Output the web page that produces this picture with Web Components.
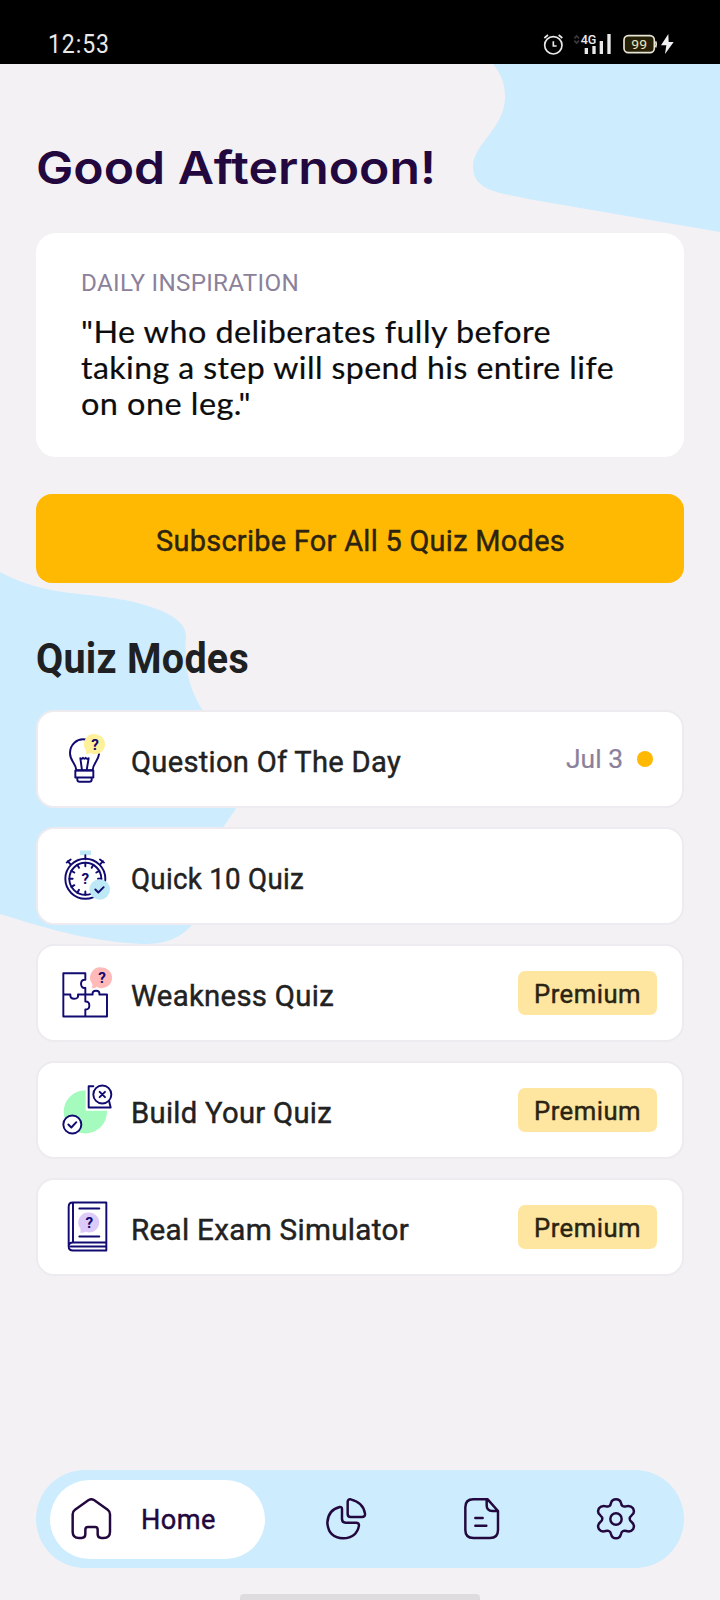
<!DOCTYPE html>
<html lang="en">
<head>
<meta charset="utf-8">
<title>Quiz Home</title>
<style>
html,body{margin:0;background:#f3f1f4}
body{width:720px;height:1600px;overflow:hidden;font-family:Roboto,"Liberation Sans",sans-serif}
</style>
</head>
<body>
<quiz-app></quiz-app>
<script>
const define = (name, html, ready) => customElements.define(name, class extends HTMLElement {
  connectedCallback() {
    if (this.shadowRoot) return;
    const t = document.createElement('template');
    t.innerHTML = html;
    this.attachShadow({mode: 'open'}).append(t.content.cloneNode(true));
    if (ready) ready(this, this.shadowRoot);
  }
});

/* One line of text, condensed or widened to the width in its attribute. */
define('fit-text', `<style>
:host{display:block;white-space:nowrap;flex:none}
span{display:inline-block;transform-origin:0 50%}
</style><span><slot></slot></span>`, (el, root) => {
  const w = +el.getAttribute('width'), span = root.querySelector('span');
  el.style.width = w + 'px';
  span.style.transform = `scaleX(${w / span.getBoundingClientRect().width})`;
});

define('status-bar', `<style>
:host{display:flex;box-sizing:border-box;height:64px;background:#000;color:#e9e9e9;padding:24px 44px 0 48px;justify-content:space-between}
fit-text{font-size:25px;line-height:41px;letter-spacing:1px}
svg{width:160px;height:40px;margin-top:1px}
</style>
<fit-text width="62">12:53</fit-text>
<svg viewBox="0 0 480 120" style="margin-right:-14px" fill="none" stroke="#e9e9e9">
<circle cx="70" cy="61" r="26" stroke-width="5"/><path d="M70 49v14h10M43 39l11-9M97 39l-11-9" stroke-width="5"/>
<path d="M133 40l7-7 7 7M133 47l7 7 7-7" stroke="#3a3a3a" stroke-width="5"/>
<g stroke-width="10"><path d="M169 69v18M192 63v24M214 48v39M237 27v60"/></g>
<text x="152" y="57" font-family="Roboto" font-size="36" font-weight="500" fill="#e9e9e9" stroke="#000" stroke-width="5" paint-order="stroke" textLength="47" lengthAdjust="spacingAndGlyphs">4G</text>
<rect x="282" y="32" width="91" height="51" rx="13" fill="#262006" stroke="#e8e4d4" stroke-width="5"/>
<path d="M377 49q4 8 0 18" stroke="#e8e4d4" stroke-width="5"/>
<text x="304" y="71" font-family="Roboto" font-size="41" fill="#ece6c4" stroke="none" textLength="47" lengthAdjust="spacingAndGlyphs">99</text>
<path d="M415 27l-22 34h16l-4 26 26-36h-15z" fill="#f2f2f2" stroke="none"/>
</svg>`);

define('inspiration-card', `<style>
:host{display:block;box-sizing:border-box;height:224px;background:#fff;border-radius:20px;padding:34.5px 44px 0 45px}
.label{color:#8b819b;font-size:24.8px;line-height:30px;margin-bottom:15.5px;letter-spacing:.3px}
.quote{color:#0c0c0c;font:30px/36px Lato,sans-serif;font-variant-ligatures:none;letter-spacing:.4px;-webkit-text-stroke:.2px #0c0c0c}
</style>
<fit-text class="label" width="218">DAILY INSPIRATION</fit-text>
<fit-text class="quote" width="470">"He who deliberates fully before</fit-text>
<fit-text class="quote" width="533">taking a step will spend his entire life</fit-text>
<fit-text class="quote" width="170">on one leg."</fit-text>`);

define('subscribe-button', `<style>
:host{display:flex;box-sizing:border-box;height:89px;background:#ffb902;border-radius:16px;margin-top:37px;padding-top:4px;align-items:center;justify-content:center;color:#2b2412;font-size:30px;-webkit-text-stroke:.45px #2b2412;letter-spacing:.3px}
</style><fit-text width="409">Subscribe For All 5 Quiz Modes</fit-text>`);

define('premium-badge', `<style>
:host{display:flex;box-sizing:border-box;width:139px;height:44px;margin-right:5px;padding-top:2px;border-radius:7px;background:#ffe6a0;align-items:center;justify-content:center;color:#2b2412;font-size:26px;-webkit-text-stroke:.45px #2b2412;letter-spacing:.5px}
</style><fit-text width="107">Premium</fit-text>`);

define('date-mark', `<style>
:host{display:flex;align-items:center;gap:14px;margin-right:9px;color:#8b819b;font-size:26.7px;-webkit-text-stroke:.2px #8b819b}
i{width:16px;height:16px;border-radius:50%;background:#ffb902}
</style><fit-text width="57">Jul 3</fit-text><i></i>`);

const icons = {
bulb: ['24 34.5', `<path d="M106 60C80 56 60 76 60 101c0 24 18 30 19 51h49c1-21 17-27 19-48"/><path d="M96 152l-5-36q5 4 8-1 4 6 8 0 4 5 9 1l-6 36M76 153h54v21H76zM82 175v6q0 6 7 6h29q7 0 7-6v-6"/><path d="M135 44a30 30 0 1 1-15 56q-6 5-13 3 3-5 1-11A30 30 0 0 1 135 44z" fill="#fff09a" stroke="none"/><text x="135" y="91">?</text>`],
watch: ['24 385.5', `<path d="M90 393h33v14H90z" fill="#bde9f7" stroke="none"/><path d="M106 407v12M61 434l-8-9M50 429l12-9M151 434l8-9M162 429l-12-9"/><circle cx="106" cy="478" r="60"/><circle cx="106" cy="478" r="48"/><path d="M106 430v10M106 516v10M58 478h10M144 478h10M82 436l5 9M130 436l-5 9M64 454l9 5M148 454l-9 5M64 502l9-5M82 520l5-9M130 520l-5-9"/><text x="106" y="494">?</text><circle cx="149" cy="510" r="31" fill="#bde9f7" stroke="none"/><path d="M136 510l9 9 16-16"/>`],
puzzle: ['24 46.5', `<path d="M40 71h66v20q-12-2-13 12 1 14 13 12v20H84q2 13-11 13t-12-13H40zM40 135v66h66v-21q12 1 12-12t-12-12v-21h22q-2-11 10-11t10 11h23v66h-66"/><path d="M156 54a31 31 0 1 1-16 58q-7 6-15 4 3-6 2-12A31 31 0 0 1 156 54z" fill="#ffb9b9" stroke="none"/><text x="156" y="101">?</text>`],
build: ['24 397.5', `<path d="M107 422v62h64a65 65 0 1 1-64-62z" fill="#a5fbbd" stroke="none"/><path d="M130 410h-14v64h66l-5-20"/><circle cx="157" cy="435" r="27" fill="#fff"/><path d="M149 427l16 16M165 427l-16 16"/><circle cx="67" cy="525" r="27" fill="#fff"/><path d="M55 525l9 9 15-16"/>`],
book: ['24 748.5', `<path d="M169 879V759H68q-12 0-12 13v119M69 759v119M169 879H69q-13 0-13 12t13 12h100zM62 891h107M88 777h60M88 861h60"/><path d="M118 789a30 30 0 1 1-11 58q-9 4-17 2 3-6 1-12A30 30 0 0 1 118 789z" fill="#dccbfa" stroke="none"/><text x="118" y="836">?</text>`]
};

define('quiz-row', `<style>
:host{display:flex;box-sizing:border-box;height:98px;border:2px solid #edebef;background:#fff;border-radius:18px;padding:0 20px;align-items:center;color:#222;font-size:30px}
svg{width:56px;height:56px;margin:1px 16.5px 0 0;fill:none;stroke:#110a70;stroke-width:5.8;stroke-linejoin:round;stroke-linecap:round;flex:none}
text{font:700 46px Roboto,sans-serif;fill:#110a70;stroke:none;text-anchor:middle;letter-spacing:0}
.t{padding-top:5px;flex:1;-webkit-text-stroke:.45px #222;letter-spacing:.3px}
</style><svg></svg><div class="t"><slot></slot></div><slot name="end"></slot>`, (el, root) => {
  const [pos, art] = icons[el.getAttribute('icon')], svg = root.querySelector('svg');
  svg.setAttribute('viewBox', pos + ' 168 168');
  svg.innerHTML = art;
});

define('nav-bar', `<style>
:host{display:flex;box-sizing:border-box;height:98px;border-radius:49px;background:#cdecfe;padding:0 14px;align-items:center;color:#22083e;font-size:27px}
.pill{display:flex;box-sizing:border-box;width:215px;height:79px;border-radius:40px;background:#fff;align-items:center;padding-left:19px;margin-right:59.3px;gap:27.5px}
fit-text{padding-top:1px;letter-spacing:.5px;-webkit-text-stroke:.45px #22083e}
svg{width:44px;height:44px;fill:none;stroke:#22083e;stroke-width:7.4;stroke-linejoin:round;stroke-linecap:round;flex:none}
.p{margin-right:91.4px}.d{margin-right:90.6px}
</style>
<div class="pill"><svg viewBox="117 126 132 132"><path d="M176 135q8-5 16 0l41 29q7 5 7 14v52q0 19-19 19h-7q-11 0-11-11v-14q0-8-8-8h-21q-8 0-8 8v14q0 11-11 11h-8q-19 0-19-19v-52q0-9 7-14z"/></svg><fit-text width="75">Home</fit-text></div>
<svg class="p" viewBox="73 126 132 132"><path d="M144 141q0-9 9-8 38 9 43 43 1 10-9 10h-34q-9 0-9-9zM120 156q7-1 7 6v30q0 11 11 11h31q9 0 9 8-6 37-48 39-44-2-47-47 2-38 37-47z"/></svg>
<svg class="d" viewBox="479 126 132 132"><path d="M562 133h-43q-24 0-24 24v68q0 24 24 24h50q24 0 24-24v-57zM559 133v18q0 17 17 17h17M525 189h22M525 212h33"/></svg>
<svg viewBox="883 126 132 132"><path d="M949 133q12 0 15 11 2 13 15 10 14-3 21 6 7 13-4 21-12 10 0 20 11 9 4 22-7 9-20 5-14-3-16 9-3 13-15 13t-15-13q-2-12-16-9-13 4-20-5-7-13 4-22 12-10 0-20-11-8-4-21 7-9 21-6 13 3 15-10 3-11 15-11z"/><circle cx="949" cy="192" r="17"/></svg>`);

define('quiz-app', `<style>
:host{display:flex;flex-direction:column;position:relative;width:720px;height:1600px;overflow:hidden;background:#f3f1f4}
.bg{position:absolute;left:0;top:0;width:720px;height:1600px}
status-bar,main,nav-bar,.grip{position:relative}
main{padding:75px 36px 0;flex:1}
.hi{font:600 45px/57px Inter,sans-serif;color:#22083e;margin-bottom:37px}
.modes{font-size:42px;line-height:51px;font-weight:700;color:#1e2022;margin-top:50px;margin-bottom:25.5px;letter-spacing:.3px}
.list{display:grid;gap:19px}
nav-bar{margin:0 36px 26px}
.grip{width:240px;height:6px;border-radius:4px 4px 0 0;background:#dedcdf;align-self:center}
</style>
<svg class="bg" viewBox="0 0 720 1600" fill="#cdecfe"><path d="M493 64C502 75 505 85 505 97C505 128 473 144 473 166C473 190 495 192 528 199L720 232V64z"/><path d="M0 572C40 593 68 592 105 597C150 603 186 616 186 636C184 665 188 688 203 711C223 740 256 767 237 807L224 826C200 855 208 895 192 925C179 939 165 944 143 944C95 942 54 931 0 914z"/></svg>
<status-bar></status-bar>
<main>
<fit-text class="hi" width="400">Good Afternoon!</fit-text>
<inspiration-card></inspiration-card>
<subscribe-button></subscribe-button>
<fit-text class="modes" width="213">Quiz Modes</fit-text>
<div class="list">
<quiz-row icon="bulb"><fit-text width="270">Question Of The Day</fit-text><date-mark slot="end"></date-mark></quiz-row>
<quiz-row icon="watch"><fit-text width="173">Quick 10 Quiz</fit-text></quiz-row>
<quiz-row icon="puzzle"><fit-text width="203">Weakness Quiz</fit-text><premium-badge slot="end"></premium-badge></quiz-row>
<quiz-row icon="build"><fit-text width="201">Build Your Quiz</fit-text><premium-badge slot="end"></premium-badge></quiz-row>
<quiz-row icon="book"><fit-text width="278">Real Exam Simulator</fit-text><premium-badge slot="end"></premium-badge></quiz-row>
</div>
</main>
<nav-bar></nav-bar>
<div class="grip"></div>`);
</script>
</body>
</html>
